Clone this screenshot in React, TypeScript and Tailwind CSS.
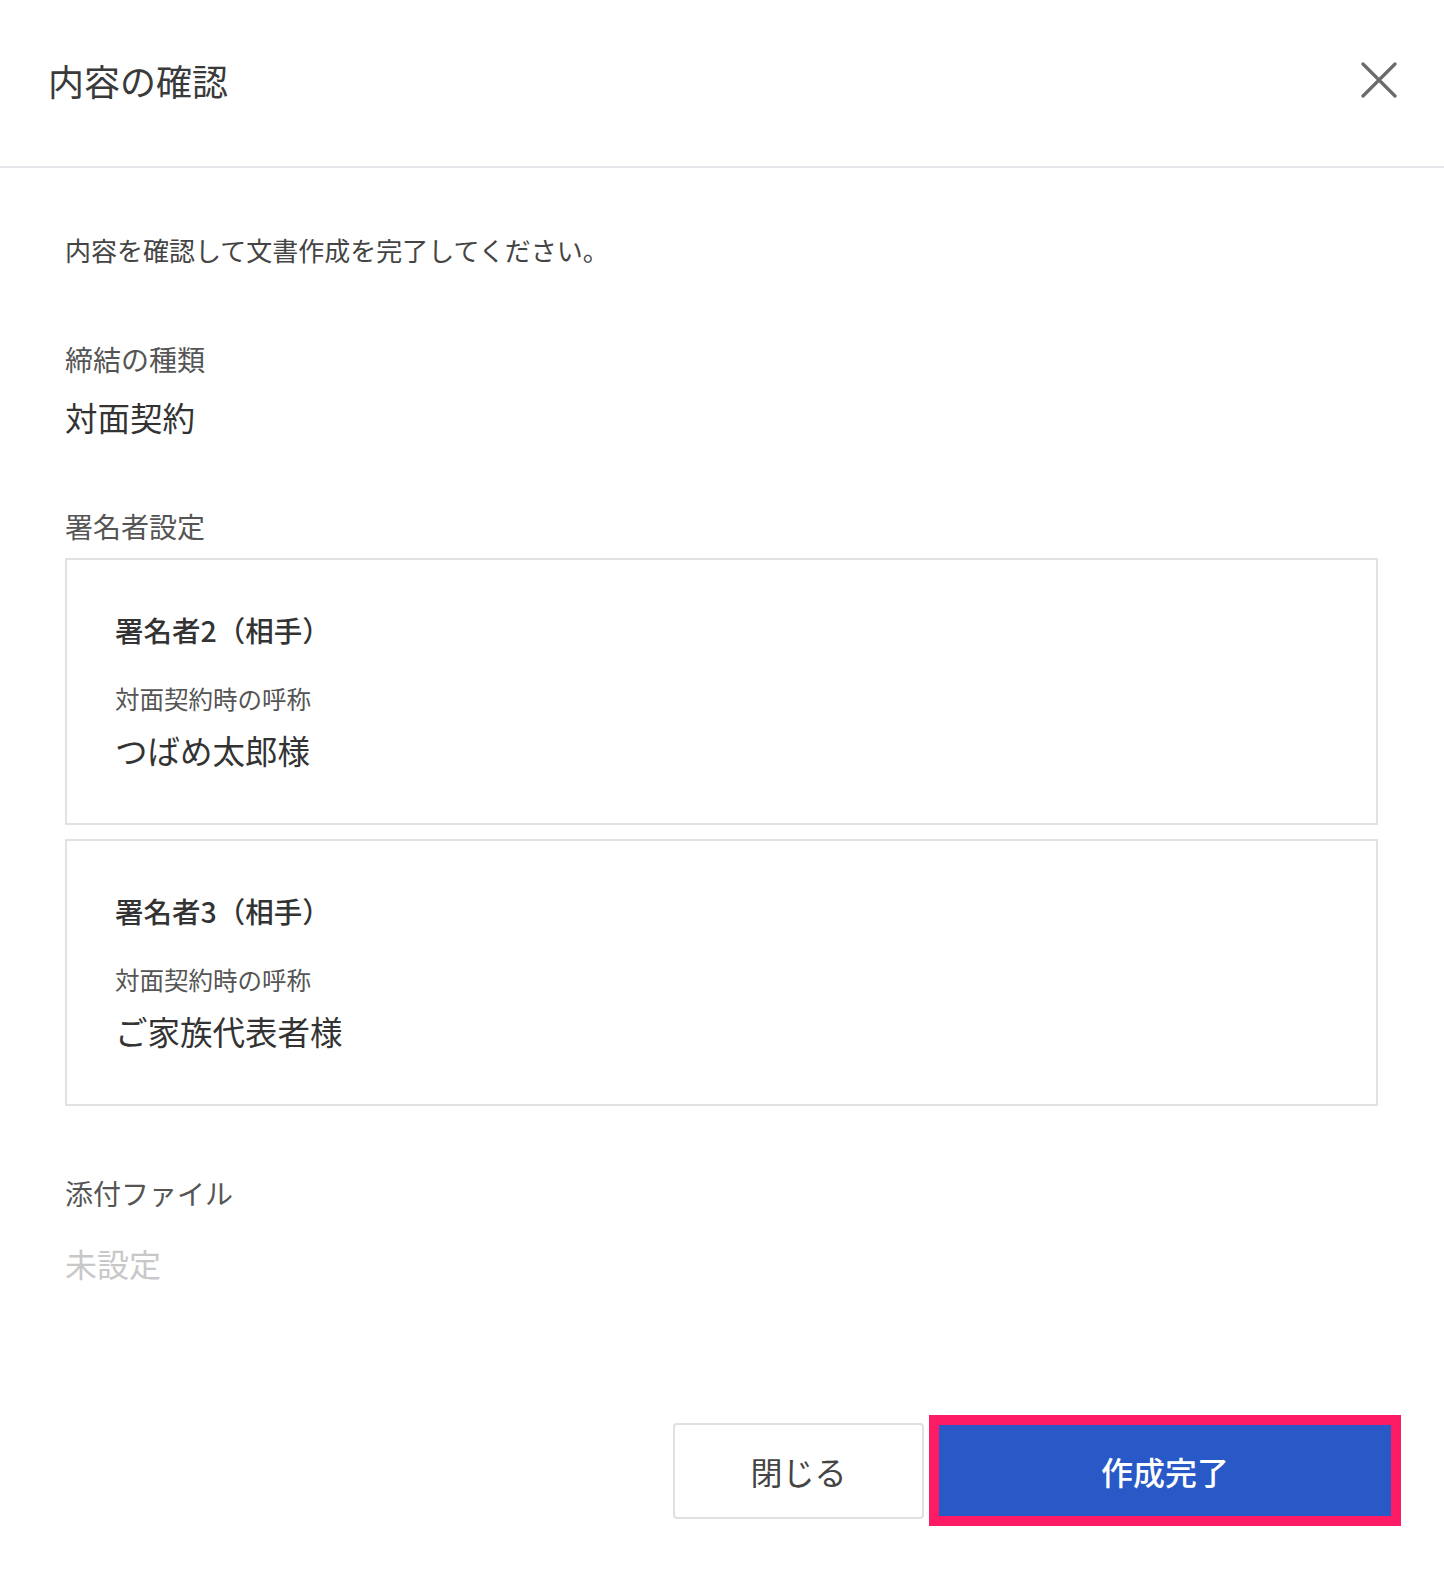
const signers = [
  { title: '署名者2（相手）', label: '対面契約時の呼称', value: 'つばめ太郎様' },
  { title: '署名者3（相手）', label: '対面契約時の呼称', value: 'ご家族代表者様' },
];

function SignerCard({ signer }: { signer: (typeof signers)[0] }) {
  return (
    <div className="h-[267px] border-2 border-[#e2e2e2] pl-[48px] pt-[50px]">
      <h3 className="text-[28.5px] leading-[40px] font-medium text-[#333]">{signer.title}</h3>
      <p className="mt-[32px] text-[24.5px] leading-[34px] text-[#555]">{signer.label}</p>
      <p className="mt-[12px] text-[32.5px] leading-[44px] text-[#333]">{signer.value}</p>
    </div>
  );
}

export default function App() {
  return (
    <div
      className="w-[1444px] min-h-[1570px] bg-white"
      style={{ fontFamily: '"Noto Sans CJK JP", "Noto Sans", sans-serif' }}
    >
      <header className="flex h-[168px] items-center justify-between border-b-2 border-[#e6e7ea] pb-[6px] pl-[48px] pr-[47px]">
        <h1 className="text-[36px] leading-[48px] text-[#3a3a3a]">内容の確認</h1>
        <button className="text-[#6b6b6b]" aria-label="閉じる">
          <svg width="36" height="36" viewBox="0 0 36 36" fill="none" stroke="currentColor" strokeWidth="3.2" strokeLinecap="round">
            <path d="M2 2L34 34M34 2L2 34" />
          </svg>
        </button>
      </header>

      <main className="px-[65px] pt-[63px] pr-[66px]">
        <p className="text-[26px] leading-[38px] text-[#444]">内容を確認して文書作成を完了してください。</p>

        <section className="mt-[70px]">
          <p className="text-[28px] leading-[40px] text-[#555]">締結の種類</p>
          <p className="mt-[16px] text-[32.5px] leading-[44px] text-[#333]">対面契約</p>
        </section>

        <section className="mt-[67px]">
          <p className="text-[28px] leading-[40px] text-[#555]">署名者設定</p>
          <div className="mt-[12px] flex flex-col gap-[14px]">
            {signers.map((signer) => (
              <SignerCard key={signer.title} signer={signer} />
            ))}
          </div>
        </section>

        <section className="mt-[67px]">
          <p className="text-[28px] leading-[40px] text-[#555]">添付ファイル</p>
          <p className="mt-[28px] text-[32px] leading-[44px] text-[#c8c8c8]">未設定</p>
        </section>
      </main>

      <footer className="mt-[130px] flex items-center justify-end gap-[5px] pr-[43px]">
        <button className="h-[96px] w-[251px] rounded-[4px] border-2 border-[#e0e0e0] bg-white text-[32px] text-[#444]">
          閉じる
        </button>
        <div className="border-[10px] border-[#fc1b64]">
          <button className="flex h-[91px] w-[452px] items-center justify-center bg-[#2859c6] text-[32px] font-medium text-white">
            作成完了
          </button>
        </div>
      </footer>
    </div>
  );
}
